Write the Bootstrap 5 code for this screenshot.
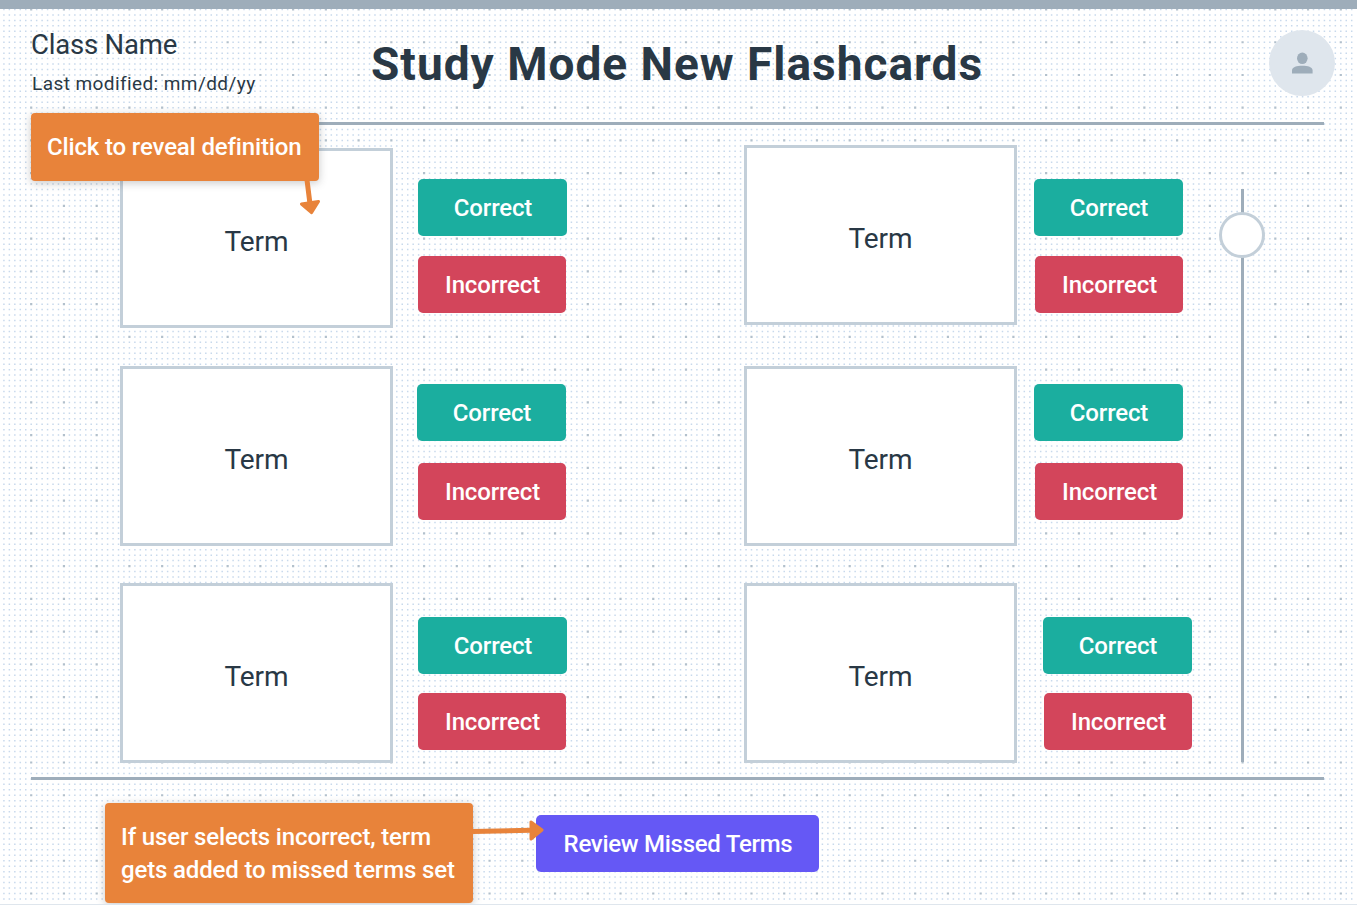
<!DOCTYPE html>
<html lang="en">
<head>
<meta charset="utf-8">
<meta name="viewport" content="width=device-width, initial-scale=1">
<title>Study Mode New Flashcards</title>
<link href="https://cdn.jsdelivr.net/npm/bootstrap@5.3.0/dist/css/bootstrap.min.css" rel="stylesheet">
<style>
  :root { --ink:#293845; --slate:#9eadba; --edge:#c3cfd9; --amber:#e8833a; }
  body { font-family: Roboto, "Liberation Sans", sans-serif; color: var(--ink); background:#fff; }
  .board { width:1357px; height:905px; border-bottom:1px solid #dfe6ed; }
  .dots { inset:0; z-index:0; }
  .topbar { height:8.5px; background:var(--slate); }
  .masthead { height:113.5px; padding:0 22px 0 31px; }
  .class-name { font-size:27.5px; line-height:32px; letter-spacing:-.2px; margin-top:20px; }
  .modified { font-size:19px; line-height:24px; letter-spacing:.42px; margin:11px 0 0 1px; }
  .page-title { left:371px; top:36px; font-size:46px; line-height:56px; font-weight:700; letter-spacing:1px; }
  .avatar { width:66px; height:66px; background:#dfe6ed; margin-top:21.5px; }
  .rule { height:3px; margin:0 33px 0 31px; background:var(--slate); }
  .stage { height:652px; }
  .lane-a { width:744px; padding:23px 0 0 120px; }
  .lane-b { width:475px; padding-top:20px; }
  .lane-a .item + .item { margin-top:38px; }
  .lane-a .item + .item + .item { margin-top:37px; }
  .lane-b .item + .item { margin-top:41px; }
  .lane-b .item + .item + .item { margin-top:37px; }
  .item { height:180px; }
  .term { width:273px; height:180px; border:3px solid var(--edge); background:#fff; font-size:28px; letter-spacing:0; padding-top:8px; }
  .answers { margin-left:25px; padding-top:31px; gap:20px; }
  .item-2 .answers { padding-top:18px; gap:22px; }
  .item-3 .answers { padding-top:34px; gap:19px; }
  .lane-a .item-2 .btn-right { margin-left:-1px; }
  .lane-b .answers { margin-left:17px; }
  .lane-b .item-1 .answers { padding-top:34px; }
  .lane-b .item-3 .answers { margin-left:26px; }
  .lane-b .btn-wrong { margin-left:1px; width:148px; }
  .btn-study { height:57px; padding:2px 0 0 1px; border:0; border-radius:5px; color:#fff; font-size:24px; font-weight:500; line-height:55px; letter-spacing:-.16px; }
  .btn-right { width:149px; background:#1bae9f; }
  .btn-wrong { width:148px; background:#d3455b; }
  .btn-review { width:283px; margin:35px 0 0 63px; background:#6558f5; letter-spacing:-.28px; }
  .slider { width:46px; height:573px; margin-top:64px; }
  .slider::before { content:""; position:absolute; left:22px; top:0; width:3px; height:100%; background:var(--slate); }
  .knob { left:0; top:23px; width:46px; height:46px; border:3px solid var(--edge); background:#fff; }
  .note { background:var(--amber); color:#fff; font-size:24px; font-weight:500; line-height:33px; border-radius:4px; box-shadow:0 2px 8px rgba(60,60,60,.28); }
  .note-reveal { left:31px; top:113px; width:287.500px; height:68px; padding:18px 16px; letter-spacing:-.15px; z-index:3; }
  .note-missed { width:368px; height:100px; padding:18px 16px; margin:23px 0 0 105px; letter-spacing:-.15px; }
  .arrows { inset:0; z-index:4; pointer-events:none; }
</style>
</head>
<body>
<div class="board position-relative overflow-hidden">
  <svg class="dots position-absolute" width="1357" height="904" aria-hidden="true"><g id="grid"></g></svg>

  <div class="position-relative">
    <div class="topbar"></div>
    <header class="masthead d-flex justify-content-between">
      <div>
        <div class="class-name">Class Name</div>
        <div class="modified">Last modified: mm/dd/yy</div>
      </div>
      <h1 class="page-title position-absolute m-0 text-nowrap">Study Mode New Flashcards</h1>
      <div class="avatar rounded-circle d-flex align-items-center justify-content-center">
        <svg width="22" height="22" viewBox="0 0 22 22" fill="#9eadba"><ellipse cx="11.300" cy="6.300" rx="5.3" ry="5.8"/><path d="M1 21.500v-3.100C1 15 5.800 13.800 11.300 13.800s10.300 1.200 10.300 4.600v3.100z"/></svg>
      </div>
    </header>
    <div class="rule"></div>

    <main class="stage d-flex align-items-start">
      <section class="lane-a">
        <div class="item item-1 d-flex">
          <div class="term d-flex align-items-center justify-content-center">Term</div>
          <div class="answers d-flex flex-column"><button class="btn btn-study btn-right">Correct</button><button class="btn btn-study btn-wrong">Incorrect</button></div>
        </div>
        <div class="item item-2 d-flex">
          <div class="term d-flex align-items-center justify-content-center">Term</div>
          <div class="answers d-flex flex-column"><button class="btn btn-study btn-right">Correct</button><button class="btn btn-study btn-wrong">Incorrect</button></div>
        </div>
        <div class="item item-3 d-flex">
          <div class="term d-flex align-items-center justify-content-center">Term</div>
          <div class="answers d-flex flex-column"><button class="btn btn-study btn-right">Correct</button><button class="btn btn-study btn-wrong">Incorrect</button></div>
        </div>
      </section>
      <section class="lane-b">
        <div class="item item-1 d-flex">
          <div class="term d-flex align-items-center justify-content-center">Term</div>
          <div class="answers d-flex flex-column"><button class="btn btn-study btn-right">Correct</button><button class="btn btn-study btn-wrong">Incorrect</button></div>
        </div>
        <div class="item item-2 d-flex">
          <div class="term d-flex align-items-center justify-content-center">Term</div>
          <div class="answers d-flex flex-column"><button class="btn btn-study btn-right">Correct</button><button class="btn btn-study btn-wrong">Incorrect</button></div>
        </div>
        <div class="item item-3 d-flex">
          <div class="term d-flex align-items-center justify-content-center">Term</div>
          <div class="answers d-flex flex-column"><button class="btn btn-study btn-right">Correct</button><button class="btn btn-study btn-wrong">Incorrect</button></div>
        </div>
      </section>
      <div class="slider position-relative"><div class="knob position-absolute rounded-circle"></div></div>
    </main>
    <div class="rule"></div>

    <footer class="d-flex align-items-start">
      <div class="note note-missed text-nowrap">If user selects incorrect, term<br>gets added to missed terms set</div>
      <button class="btn btn-study btn-review">Review Missed Terms</button>
    </footer>
  </div>

  <div class="note note-reveal position-absolute text-nowrap">Click to reveal definition</div>
  <svg class="arrows position-absolute" width="1357" height="904" fill="#e8833a" stroke="#e8833a" stroke-linejoin="round" aria-hidden="true">
    <path d="M307 180l3 24M473 831.500l58-1.300" stroke-width="5"/>
    <path d="M301.500 204l17-2.500-7 11.200zM531 822v17l11-9z" stroke-width="3"/>
  </svg>
</div>
<script src="https://cdn.jsdelivr.net/npm/bootstrap@5.3.0/dist/js/bootstrap.bundle.min.js"></script>
<script>
  // Dot grid: a fine dot every step, a stronger one every sixth step.
  const step = 32.74 / 6, x0 = 31.2, y0 = 9.5;
  let minor = '', major = '';
  for (let r = 0; y0 + r * step < 904; r++) {
    for (let c = -5; x0 + c * step < 1357; c++) {
      const x = x0 + c * step, y = y0 + r * step;
      if (r % 6 === 0 && c % 6 === 0) major += `M${(x - 1.1).toFixed(2)} ${(y - 1.1).toFixed(2)}h2.200v2.200h-2.200z`;
      else minor += `M${(x - .75).toFixed(2)} ${(y - .75).toFixed(2)}h1.500v1.500h-1.500z`;
    }
  }
  document.getElementById('grid').innerHTML = `<path fill="#c8d9ec" d="${minor}"/><path fill="#b2c0cc" d="${major}"/>`;
</script>
</body>
</html>
